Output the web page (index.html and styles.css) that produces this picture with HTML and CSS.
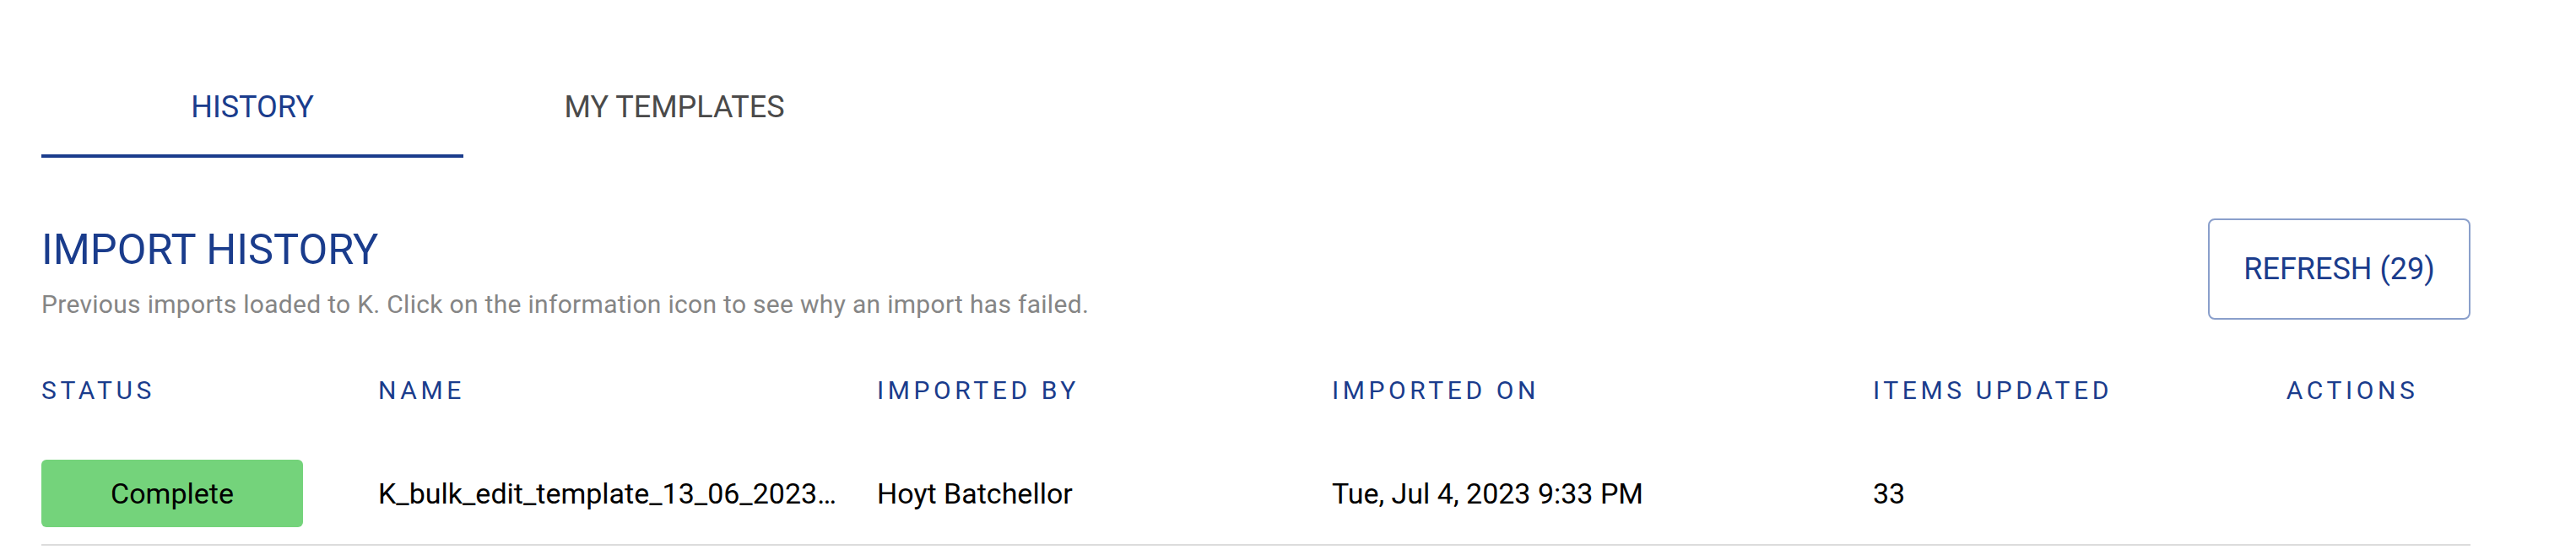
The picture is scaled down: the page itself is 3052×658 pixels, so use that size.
FILE: index.html
```html
<!DOCTYPE html>
<html lang="en">
<head>
  <meta charset="UTF-8">
  <title>Import History</title>
  <link rel="stylesheet" href="styles.css">
</head>
<body>

  <!-- Tabs -->
  <nav class="tabs">
    <a class="tab active" href="#">History</a>
    <a class="tab" href="#">My Templates</a>
  </nav>

  <!-- Section header -->
  <div class="section-head">
    <div class="section-title">
      <h2>Import History</h2>
      <p>Previous imports loaded to K. Click on the information icon to see why an import has failed.</p>
    </div>
    <button class="refresh-btn">Refresh (29)</button>
  </div>

  <!-- History table -->
  <div class="history-table">
    <div class="row head">
      <div>Status</div>
      <div>Name</div>
      <div>Imported By</div>
      <div>Imported On</div>
      <div>Items Updated</div>
      <div class="actions">Actions</div>
    </div>
    <div class="row item">
      <div><span class="badge complete">Complete</span></div>
      <div><span class="file-name" title="K_bulk_edit_template_13_06_2023_v2.xlsx">K_bulk_edit_template_13_06_2023_v2.xlsx</span></div>
      <div>Hoyt Batchellor</div>
      <div>Tue, Jul 4, 2023 9:33 PM</div>
      <div>33</div>
      <div class="actions"></div>
    </div>
  </div>

</body>
</html>
```

FILE: styles.css
```css
* {
  margin: 0;
  padding: 0;
  box-sizing: border-box;
}

body {
  font-family: 'Roboto', 'Liberation Sans', sans-serif;
  background: #fff;
  color: #000;
  padding: 70px 0 0 49px;
}

/* Tabs */
.tabs {
  display: flex;
}

.tab {
  width: 500px;
  padding: 36px 0 35px;
  text-align: center;
  font-size: 36px;
  line-height: 42px;
  text-transform: uppercase;
  text-decoration: none;
  color: #4a4a4a;
  border-bottom: 4px solid transparent;
}

.tab.active {
  color: #1a3c8c;
  border-bottom-color: #1a3c8c;
}

/* Header */
.section-head {
  width: 2878px;
  margin-top: 72px;
  display: flex;
  justify-content: space-between;
  align-items: flex-start;
}

.section-title h2 {
  margin-top: 7px;
  font-size: 50.5px;
  line-height: 60px;
  font-weight: 400;
  text-transform: uppercase;
  color: #1a3c8c;
}

.section-title p {
  margin-top: 17px;
  font-size: 30px;
  line-height: 36px;
  letter-spacing: 0.3px;
  color: #858585;
}

.refresh-btn {
  width: 311px;
  height: 120px;
  border: 2px solid #8a9fcb;
  border-radius: 8px;
  background: #fff;
  font-family: inherit;
  font-size: 36px;
  text-transform: uppercase;
  color: #1a3c8c;
  cursor: pointer;
}

/* Table */
.history-table {
  width: 2878px;
  margin-top: 66px;
}

.row {
  display: grid;
  grid-template-columns: 399px 591px 539px 641px 428px 280px;
  align-items: center;
}

.row.head {
  font-size: 30px;
  line-height: 36px;
  letter-spacing: 4.6px;
  text-transform: uppercase;
  color: #1a3c8c;
}

.row.item {
  padding: 64px 0 20px;
  border-bottom: 2px solid #dcdcdc;
  font-size: 34px;
  line-height: 40px;
}

.actions {
  text-align: center;
}

.badge {
  display: flex;
  align-items: center;
  justify-content: center;
  width: 310px;
  height: 80px;
  border-radius: 6px;
}

.badge.complete {
  background: #74d37b;
}

.file-name {
  display: block;
  width: 552px;
  white-space: nowrap;
  overflow: hidden;
  text-overflow: ellipsis;
}
```
